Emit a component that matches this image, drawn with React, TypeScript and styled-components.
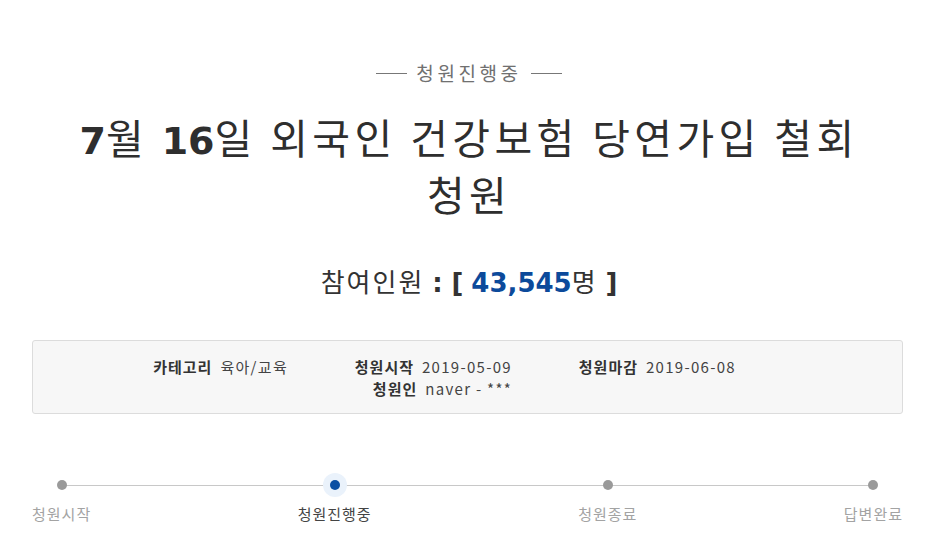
import styled, { createGlobalStyle } from 'styled-components';

const GlobalStyle = createGlobalStyle`
  html, body {
    margin: 0;
    padding: 0;
    background: #fff;
  }
  body {
    font-family: "Noto Sans CJK KR", "Noto Sans", sans-serif;
    color: #333;
  }
`;

const Page = styled.div`
  width: 938px;
  padding-top: 61px;
`;

const Status = styled.div`
  display: flex;
  align-items: center;
  justify-content: center;
  gap: 9px;
  font-size: 19px;
  line-height: 24px;
  letter-spacing: 3.6px;
  color: #707070;

  &::before,
  &::after {
    content: '';
    width: 31px;
    height: 1px;
    background: #777;
  }
`;

const Title = styled.h1`
  margin: 25px 0 0;
  text-align: center;
  font-size: 41px;
  line-height: 52px;
  font-weight: 400;
  letter-spacing: 4.4px;
  color: #2e2e2e;
`;

const Num = styled.span`
  font-family: "DejaVu Sans", Verdana, sans-serif;
  font-weight: 700;
  font-size: 38px;
  letter-spacing: 0;
`;

const Count = styled.p`
  margin: 44px 0 0;
  text-align: center;
  font-size: 26px;
  line-height: 36px;
  letter-spacing: 2px;
  color: #333;
`;

const Strong = styled.b<{ $blue?: boolean }>`
  font-family: "DejaVu Sans", Verdana, sans-serif;
  font-weight: 700;
  letter-spacing: 0;
  color: ${({ $blue }) => ($blue ? '#0c4a9b' : '#333')};
`;

const InfoBox = styled.ul`
  list-style: none;
  box-sizing: border-box;
  width: 871px;
  margin: 39px 0 0 32px;
  padding: 15px 0 13px 31px;
  background: #f7f7f7;
  border: 1px solid #dcdcdc;
  border-radius: 3px;
  display: grid;
  grid-template-columns: repeat(3, 224px);
  font-size: 15px;
  line-height: 22px;
`;

const InfoItem = styled.li<{ $col?: number }>`
  text-align: right;
  grid-column: ${({ $col }) => $col ?? 'auto'};
  color: #444;
  letter-spacing: 1.3px;
`;

const InfoLabel = styled.b`
  font-weight: 700;
  color: #333;
  letter-spacing: 1px;
  margin-right: 8px;
`;

const Steps = styled.ol`
  list-style: none;
  position: relative;
  width: 871px;
  margin: 59px 0 0 32px;
  padding: 0;
  display: flex;
  justify-content: space-between;

  &::before {
    content: '';
    position: absolute;
    top: 12px;
    left: 32px;
    right: 32px;
    height: 1px;
    background: #c8c8c8;
  }
`;

const Step = styled.li<{ $active?: boolean }>`
  display: flex;
  flex-direction: column;
  align-items: center;
  gap: 7px;
  font-size: 15px;
  line-height: 20px;
  letter-spacing: 1px;
  color: ${({ $active }) => ($active ? '#444' : '#a3a3a3')};
`;

const DotWrap = styled.span<{ $active?: boolean }>`
  display: flex;
  align-items: center;
  justify-content: center;
  width: 24px;
  height: 24px;
  border-radius: 50%;
  position: relative;
  background: ${({ $active }) => ($active ? '#eaf2fb' : 'transparent')};
`;

const Dot = styled.span<{ $active?: boolean }>`
  width: 10px;
  height: 10px;
  border-radius: 50%;
  background: ${({ $active }) => ($active ? '#0b4fa3' : '#9a9a9a')};
`;

const steps = [
  { label: '청원시작', active: false },
  { label: '청원진행중', active: true },
  { label: '청원종료', active: false },
  { label: '답변완료', active: false },
];

export default function App() {
  return (
    <Page>
      <GlobalStyle />
      <Status>청원진행중</Status>
      <Title>
        <Num>7</Num>월 <Num>16</Num>일 외국인 건강보험 당연가입 철회
        <br />
        청원
      </Title>
      <Count>
        참여인원 <Strong>: [</Strong> <Strong $blue>43,545</Strong>명 <Strong>]</Strong>
      </Count>
      <InfoBox>
        <InfoItem>
          <InfoLabel>카테고리</InfoLabel>육아/교육
        </InfoItem>
        <InfoItem>
          <InfoLabel>청원시작</InfoLabel>2019-05-09
        </InfoItem>
        <InfoItem>
          <InfoLabel>청원마감</InfoLabel>2019-06-08
        </InfoItem>
        <InfoItem $col={2}>
          <InfoLabel>청원인</InfoLabel>naver - ***
        </InfoItem>
      </InfoBox>
      <Steps>
        {steps.map((s) => (
          <Step key={s.label} $active={s.active}>
            <DotWrap $active={s.active}>
              <Dot $active={s.active} />
            </DotWrap>
            {s.label}
          </Step>
        ))}
      </Steps>
    </Page>
  );
}
